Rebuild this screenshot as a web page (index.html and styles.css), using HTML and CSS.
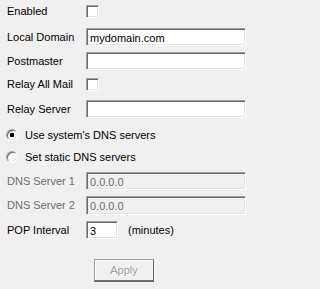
FILE: index.html
```html
<!DOCTYPE html>
<html>
<head>
<meta charset="utf-8">
<link rel="stylesheet" href="styles.css">
</head>
<body>
<div class="panel">
  <div class="row r1"><span class="label">Enabled</span><input class="check" type="checkbox"></div>
  <div class="row r2"><span class="label">Local Domain</span><input class="field" type="text" value="mydomain.com"></div>
  <div class="row r3"><span class="label">Postmaster</span><input class="field" type="text" value=""></div>
  <div class="row r4"><span class="label">Relay All Mail</span><input class="check" type="checkbox"></div>
  <div class="row r5"><span class="label">Relay Server</span><input class="field" type="text" value=""></div>
  <div class="row radio-row r6"><input class="radio" type="radio" name="dns" checked><span>Use system's DNS servers</span></div>
  <div class="row radio-row r7"><input class="radio" type="radio" name="dns"><span>Set static DNS servers</span></div>
  <div class="row r8"><span class="label disabled">DNS Server 1</span><input class="field off" type="text" value="0.0.0.0" disabled></div>
  <div class="row r9"><span class="label disabled">DNS Server 2</span><input class="field off" type="text" value="0.0.0.0" disabled></div>
  <div class="row r10"><span class="label">POP Interval</span><input class="field small" type="text" value="3"><span class="unit">(minutes)</span></div>
  <div class="actions"><button class="apply" disabled>Apply</button></div>
</div>
</body>
</html>
```

FILE: styles.css
```css
html, body {
  margin: 0;
  padding: 0;
  background: #f0f0f0;
}
body {
  width: 254px;
  height: 289px;
  overflow: hidden;
  font-family: "Liberation Sans", Arial, sans-serif;
  font-size: 11px;
  color: #000;
}
.panel {
  display: flex;
  flex-direction: column;
  padding-left: 7px;
}
.row {
  display: flex;
  align-items: center;
}
.label {
  width: 79px;
  flex: none;
  white-space: nowrap;
  line-height: 13px;
}
.label.disabled { color: #6d6d6d; }

.r1 { margin-top: 5px; height: 13px; }
.r2 { margin-top: 10px; height: 18px; }
.r3 { margin-top: 6px; height: 18px; }
.r4 { margin-top: 8px; height: 13px; }
.r5 { margin-top: 9px; height: 18px; }
.r6 { margin-top: 11px; height: 12px; }
.r7 { margin-top: 10px; height: 12px; }
.r8 { margin-top: 9px; height: 18px; }
.r9 { margin-top: 6px; height: 19px; }
.r10 { margin-top: 6px; height: 18px; }

.field, .check, .radio {
  -webkit-appearance: none;
  appearance: none;
  margin: 0;
  box-sizing: border-box;
  background: #fff;
  border-style: solid;
  border-width: 1px;
  border-color: #a0a0a0 #ffffff #ffffff #a0a0a0;
  box-shadow: inset 1px 1px 0 #696969, inset -1px -1px 0 #e3e3e3;
  outline: none;
}
.field {
  width: 160px;
  height: 100%;
  padding: 1px 2px 0 3px;
  font-family: "Liberation Sans", Arial, sans-serif;
  font-size: 11px;
  color: #000;
}
.field.off {
  background: #f0f0f0;
  color: #6d6d6d;
  -webkit-text-fill-color: #6d6d6d;
  opacity: 1;
}
.field.small { width: 32px; }
.unit { margin-left: 10px; }

.check {
  width: 13px;
  height: 13px;
}
.radio-row { padding-left: 0; margin-left: -1px; }
.radio {
  width: 12px;
  height: 12px;
  border-radius: 50%;
  margin-right: 7px;
  flex: none;
}
.radio:checked {
  background: radial-gradient(circle at 50% 50%, #000 0, #000 2px, #fff 2.6px);
}

.actions {
  margin-top: 20px;
  padding-left: 87px;
  display: flex;
}
.apply {
  width: 60px;
  height: 23px;
  box-sizing: border-box;
  background: #f0f0f0;
  border: 1px solid #a0a0a0;
  border-right-color: #696969;
  border-bottom: 2px solid #696969;
  box-shadow: inset 1px 1px 0 #fff;
  font-family: "Liberation Sans", Arial, sans-serif;
  font-size: 11px;
  color: #a0a0a0;
  text-shadow: 1px 1px 0 #fff;
  padding: 0;
}
```
